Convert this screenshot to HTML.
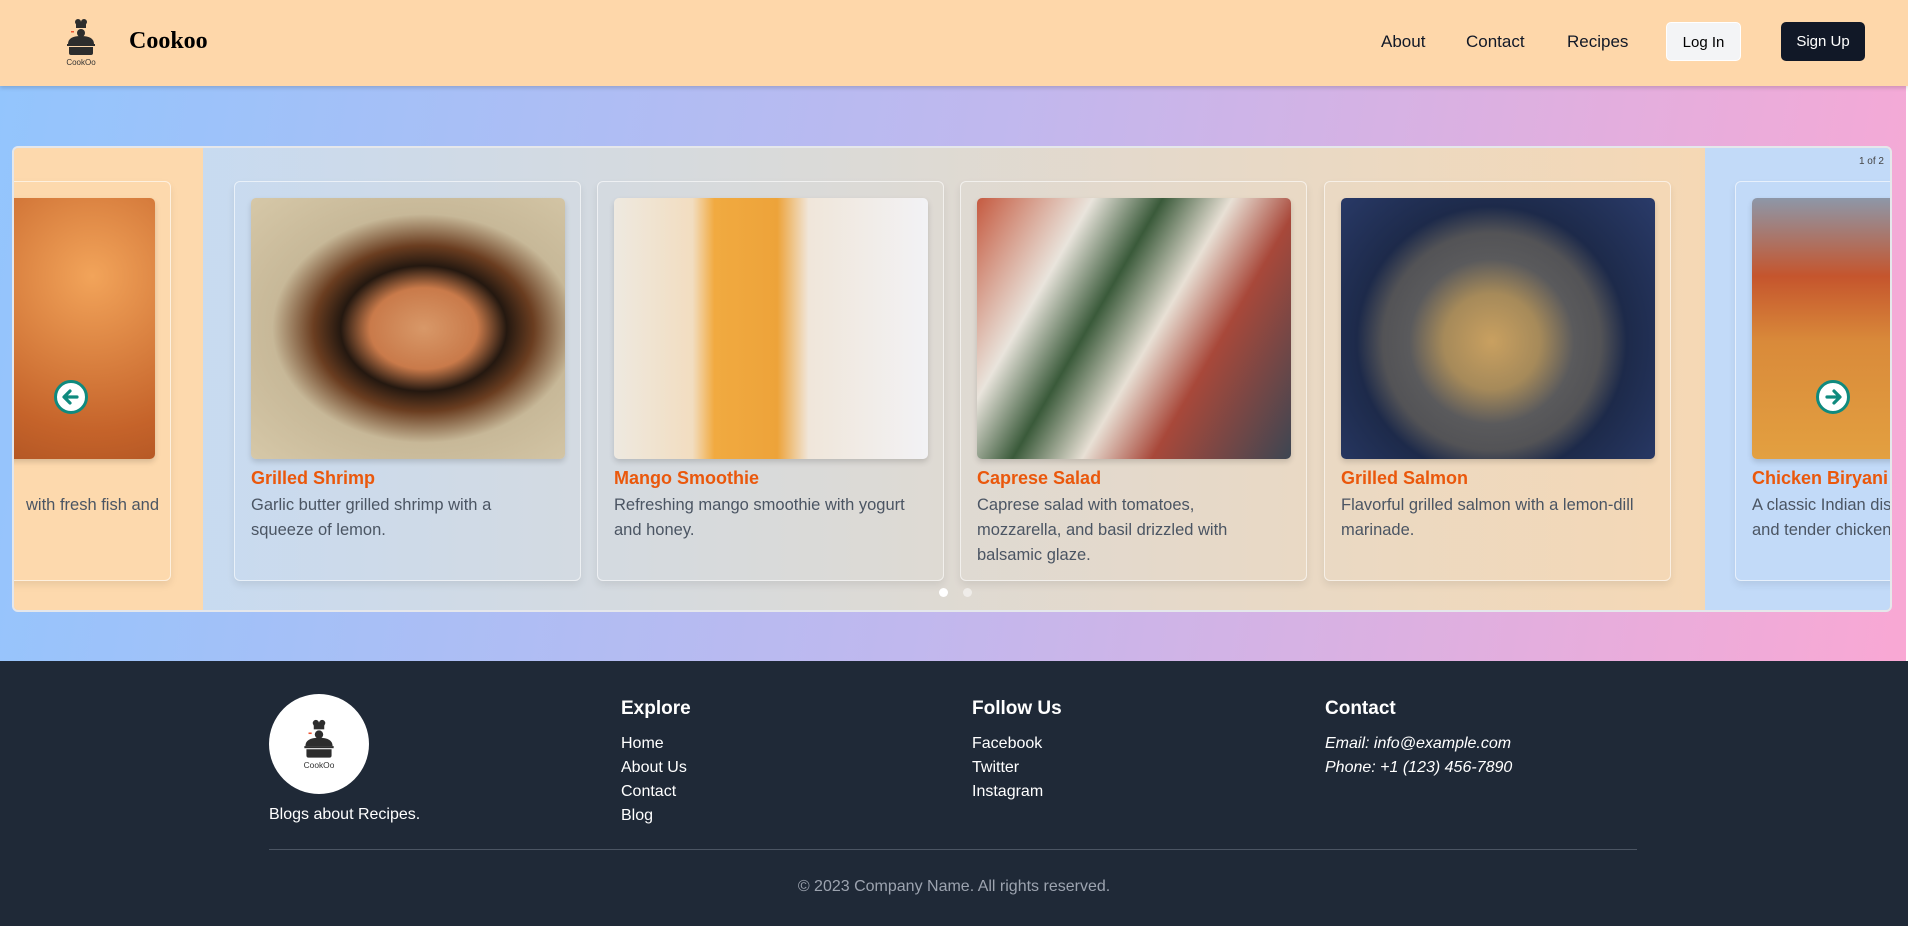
<!DOCTYPE html>
<html><head><meta charset="utf-8"><style>
*{box-sizing:border-box;margin:0;padding:0}
body{width:1908px;height:926px;overflow:hidden;font-family:"Liberation Sans",sans-serif;background:#1f2937;position:relative}
.hdr{position:absolute;left:0;top:0;width:1908px;height:86px;background:#fed7aa;box-shadow:0 2px 4px rgba(0,0,0,.15);z-index:2}
.hdr .brand{position:absolute;left:129px;top:28px;font-family:"Liberation Serif",serif;font-weight:bold;font-size:24px;color:#000}
.nav{position:absolute;top:32px;font-size:17px;color:#111827}
.btn{position:absolute;top:22px;height:39px;border-radius:5px;font-size:15px;line-height:39px;text-align:center}
.main{position:absolute;left:0;top:85px;width:1908px;height:576px;background:linear-gradient(100deg,#93c5fd,#c0b8ee 50%,#f9a8d4);border-right:2px solid #fff}
.car{position:absolute;left:12px;top:146px;width:1880px;height:466px;border:2px solid #e5e7eb;border-radius:6px;overflow:hidden;background:linear-gradient(90deg,#c2dbf8,#fbd8ad)}
.pl{position:absolute;left:0;top:0;width:189px;height:100%;background:#fdd9ad}
.pr{position:absolute;left:1691px;top:0;width:200px;height:100%;background:#c2daf8}
.card{position:absolute;top:33px;width:347px;height:400px;border:1px solid rgba(255,255,255,.6);border-radius:6px;box-shadow:0 4px 8px rgba(0,0,0,.08)}
.card .im{position:absolute;left:16px;top:16px;width:314px;height:261px;border-radius:5px;box-shadow:0 3px 6px rgba(0,0,0,.15)}
.card h3{position:absolute;left:16px;top:286px;font-size:18px;color:#ea580c;font-weight:bold;white-space:nowrap}
.card p{position:absolute;left:16px;top:311px;width:305px;font-size:16.5px;line-height:25px;color:#4b5563}
.arr{position:absolute;top:232px;width:34px;height:34px;border-radius:50%;background:#fff;border:3px solid #0f8a7e}
.ft{position:absolute;color:#fff}
.ft h4{font-size:19px;font-weight:bold;margin-bottom:12px}
.ft div{font-size:16px;line-height:24px}
</style></head><body>
<div class="hdr">
<svg style="position:absolute;left:60px;top:17px" width="42" height="50" viewBox="0 0 42 50">
<circle cx="18" cy="5" r="3" fill="#2d2d2d"/><circle cx="24" cy="5" r="3" fill="#2d2d2d"/><rect x="16" y="5" width="10" height="6" fill="#2d2d2d"/>
<circle cx="21" cy="16" r="4" fill="#2d2d2d"/><rect x="11" y="14" width="3" height="1.5" fill="#e53"/>
<path d="M8 27 Q8 19 21 19 Q34 19 34 27Z" fill="#2d2d2d"/><rect x="7" y="27" width="28" height="2" fill="#2d2d2d"/><path d="M9 30h24v6q0 2-2 2H11q-2 0-2-2z" fill="#2d2d2d"/>
<text x="21" y="48" font-size="8" text-anchor="middle" fill="#333" font-family="Liberation Sans">CookOo</text></svg>
<div class="brand">Cookoo</div>
<div class="nav" style="left:1381px">About</div>
<div class="nav" style="left:1466px">Contact</div>
<div class="nav" style="left:1567px">Recipes</div>
<div class="btn" style="left:1666px;width:75px;background:#f3f4f6;border:1px solid #fff;color:#000">Log In</div>
<div class="btn" style="left:1781px;width:84px;background:#111827;color:#fff">Sign Up</div>
</div>
<div class="main"></div>
<div class="car">
<div class="pl"></div><div class="pr"></div>
<div style="position:absolute;right:6px;top:8px;font-size:10px;color:#444">1 of 2</div>
<div class="card" style="left:-190px"><div class="im" style="background:radial-gradient(circle at 80% 30%,#f2a45a,#c5632a 50%,#8a3b18)"></div><p style="left:16px;width:318px;text-align:right">with fresh fish and</p></div>
<div class="card" style="left:220px"><div class="im" style="background:radial-gradient(ellipse at 55% 50%,#d89868 0,#c97a4a 22%,#241810 34%,#6a3d20 45%,#c7b898 62%,#d6c8a8)"></div><h3>Grilled Shrimp</h3><p>Garlic butter grilled shrimp with a squeeze of lemon.</p></div>
<div class="card" style="left:583px"><div class="im" style="background:linear-gradient(90deg,#eee9e0 0,#f2ddc0 25%,#f1aa40 32%,#eda33a 52%,#f0e6da 62%,#f2f2f5)"></div><h3>Mango Smoothie</h3><p>Refreshing mango smoothie with yogurt and honey.</p></div>
<div class="card" style="left:946px"><div class="im" style="background:linear-gradient(120deg,#c55a40 0,#e9e4dc 25%,#3a5a3a 40%,#e8e0d5 55%,#a8483a 70%,#3d4652)"></div><h3>Caprese Salad</h3><p>Caprese salad with tomatoes, mozzarella, and basil drizzled with balsamic glaze.</p></div>
<div class="card" style="left:1310px"><div class="im" style="background:radial-gradient(circle at 48% 55%,#c9a060 0,#a68a5a 22%,#5a5a5c 38%,#535356 50%,#1d2a4a 62%,#2a3b6a)"></div><h3>Grilled Salmon</h3><p>Flavorful grilled salmon with a lemon-dill marinade.</p></div>
<div class="card" style="left:1721px"><div class="im" style="background:linear-gradient(180deg,#8d97a8 0,#c5552d 30%,#d98a3a 55%,#e3a040)"></div><h3>Chicken Biryani</h3><p style="width:175px">A classic Indian dish and tender chicken.</p></div>
<div class="arr" style="left:40px"><svg width="28" height="28" viewBox="0 0 28 28"><path d="M20 14H8M13 8l-6 6 6 6" stroke="#0f8a7e" stroke-width="3.2" fill="none" stroke-linecap="round" stroke-linejoin="round"/></svg></div>
<div class="arr" style="left:1802px"><svg width="28" height="28" viewBox="0 0 28 28"><path d="M8 14h12M15 8l6 6-6 6" stroke="#0f8a7e" stroke-width="3.2" fill="none" stroke-linecap="round" stroke-linejoin="round"/></svg></div>
<div style="position:absolute;left:925px;top:440px;width:9px;height:9px;border-radius:50%;background:#fff"></div>
<div style="position:absolute;left:949px;top:440px;width:9px;height:9px;border-radius:50%;background:rgba(255,255,255,.5)"></div>
</div>
<div style="position:absolute;left:269px;top:694px;width:100px;height:100px;border-radius:50%;background:#fff">
<svg style="position:absolute;left:28px;top:20px" width="44" height="60" viewBox="0 0 42 50">
<circle cx="18" cy="5" r="3" fill="#2d2d2d"/><circle cx="24" cy="5" r="3" fill="#2d2d2d"/><rect x="16" y="5" width="10" height="6" fill="#2d2d2d"/>
<circle cx="21" cy="16" r="4" fill="#2d2d2d"/><rect x="11" y="14" width="3" height="1.5" fill="#e53"/>
<path d="M8 27 Q8 19 21 19 Q34 19 34 27Z" fill="#2d2d2d"/><rect x="7" y="27" width="28" height="2" fill="#2d2d2d"/><path d="M9 30h24v6q0 2-2 2H11q-2 0-2-2z" fill="#2d2d2d"/>
<text x="21" y="48" font-size="8" text-anchor="middle" fill="#333" font-family="Liberation Sans">CookOo</text></svg></div>
<div class="ft" style="left:269px;top:803px"><div>Blogs about Recipes.</div></div>
<div class="ft" style="left:621px;top:698px"><h4>Explore</h4><div>Home</div><div>About Us</div><div>Contact</div><div>Blog</div></div>
<div class="ft" style="left:972px;top:698px"><h4>Follow Us</h4><div>Facebook</div><div>Twitter</div><div>Instagram</div></div>
<div class="ft" style="left:1325px;top:698px"><h4>Contact</h4><div style="font-style:italic">Email: info@example.com</div><div style="font-style:italic">Phone: +1 (123) 456-7890</div></div>
<div style="position:absolute;left:269px;top:849px;width:1368px;height:1px;background:#4b5563"></div>
<div style="position:absolute;left:0;width:1908px;top:878px;text-align:center;color:#9ca3af;font-size:16px">© 2023 Company Name. All rights reserved.</div>
</body></html>
